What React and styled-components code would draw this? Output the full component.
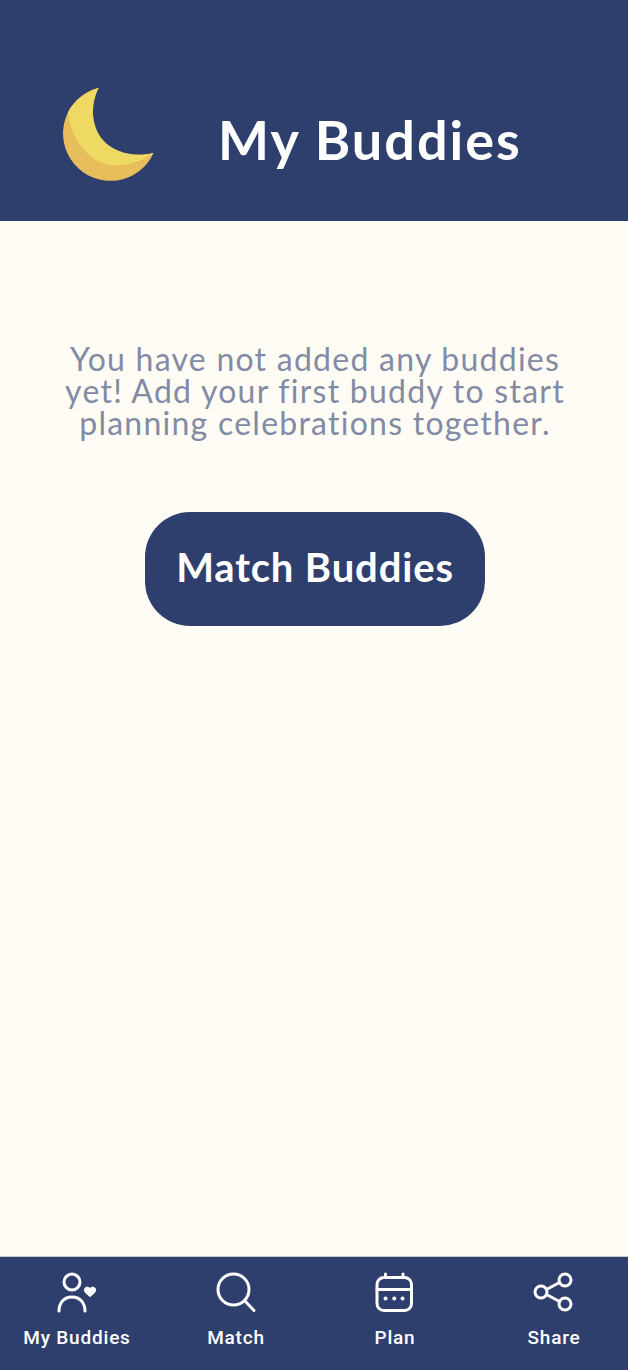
import React from "react";
import styled, { createGlobalStyle } from "styled-components";

const GlobalStyle = createGlobalStyle`
  html, body { margin: 0; padding: 0; height: 100%; }
  body { background: #fffcf5; font-family: Lato, sans-serif; }
  #root { height: 100%; }
`;

const Screen = styled.div`
  height: 1370px;
  display: flex;
  flex-direction: column;
  background: #fffcf5;
`;

const Header = styled.header`
  height: 221px;
  flex: none;
  background: #2f3f6d;
  display: flex;
  align-items: center;
  padding: 47px 0 0 63px;
  box-sizing: border-box;
  gap: 63px;
`;

const Title = styled.h1`
  margin: 0;
  color: #fff;
  font-family: Lato, sans-serif;
  font-weight: 700;
  font-size: 54px;
  line-height: 60px;
  letter-spacing: 2px;
  padding-top: 12px;
`;

const Main = styled.main`
  flex: 1;
  display: flex;
  flex-direction: column;
  align-items: center;
  padding: 122px 0 0 2px;
`;

const Message = styled.p`
  margin: 0;
  width: 530px;
  text-align: center;
  color: #828ba3;
  font-size: 32px;
  line-height: 32px;
  letter-spacing: 1.25px;
`;

const MatchButton = styled.button`
  margin-top: 73px;
  width: 340px;
  height: 114px;
  padding: 0 0 4px;
  border: 0;
  border-radius: 45px;
  background: #2f3f6d;
  color: #fff;
  font-family: Lato, sans-serif;
  font-weight: 700;
  font-size: 40px;
  letter-spacing: 0.85px;
`;

const TabBar = styled.nav`
  height: 114px;
  flex: none;
  box-sizing: border-box;
  border-top: 1px solid #c9c9c9;
  background: #2f3f6d;
  display: grid;
  grid-template-columns: repeat(4, 140px);
  column-gap: 19px;
  padding-left: 7px;
`;

const Tab = styled.div`
  display: flex;
  flex-direction: column;
  align-items: center;
  padding-top: 15px;
  color: #fff;
  font-family: Roboto, sans-serif;
  font-weight: 500;
  font-size: 19px;
  line-height: 22px;
  letter-spacing: 0.8px;
  svg { display: block; margin-bottom: 13px; }
`;

const Moon = () => (
  <svg width="92" height="94" viewBox="70 50 276 282">
    <path d="M177 52A142 142 0 1 0 342 247C290 262 225 250 190 210C155 170 150 105 177 52Z" fill="#e8bd5c" />
    <path d="M177 52C135 68 102 92 85 125C90 200 150 285 225 285C270 285 310 270 342 247C290 262 225 250 190 210C155 170 150 105 177 52Z" fill="#eeda62" />
  </svg>
);

const Icon = ({ children }) => (
  <svg width="42" height="42" viewBox="0 0 42 42" fill="none" stroke="#fff" strokeWidth="3" strokeLinecap="round" strokeLinejoin="round">
    {children}
  </svg>
);

export default function App() {
  return (
    <Screen>
      <GlobalStyle />
      <Header>
        <Moon />
        <Title>My Buddies</Title>
      </Header>
      <Main>
        <Message>You have not added any buddies yet! Add your first buddy to start planning celebrations together.</Message>
        <MatchButton>Match Buddies</MatchButton>
      </Main>
      <TabBar>
        <Tab>
          <Icon>
            <circle cx="16" cy="10" r="8" />
            <path d="M3 39c0-8 5-14 13-14s13 6 13 14" />
            <path d="M34 16.500c-1.700-2.800-6.500-1.200-5.500 2.400.7 2 3 3.800 5.500 5.600 2.500-1.800 4.800-3.600 5.500-5.600 1-3.600-3.800-5.200-5.500-2.400Z" fill="#fff" strokeWidth="1" />
          </Icon>
          My Buddies
        </Tab>
        <Tab>
          <Icon>
            <circle cx="18.500" cy="17.500" r="15.500" />
            <path d="M29.500 28.500l9.500 10" />
          </Icon>
          Match
        </Tab>
        <Tab>
          <Icon>
            <rect x="3" y="5.500" width="34.500" height="33" rx="7" />
            <path d="M3 17.500h34.500M11.500 2v3M29 2v3" />
            <path d="M11.500 26.500h.1M20.200 26.500h.1M28.500 26.500h.1" strokeWidth="4" />
          </Icon>
          Plan
        </Tab>
        <Tab>
          <Icon>
            <circle cx="32" cy="8" r="6" />
            <circle cx="8" cy="20" r="6" />
            <circle cx="32" cy="32" r="6" />
            <path d="M13.500 17.500l13-7M13.500 22.500l13 7" />
          </Icon>
          Share
        </Tab>
      </TabBar>
    </Screen>
  );
}
